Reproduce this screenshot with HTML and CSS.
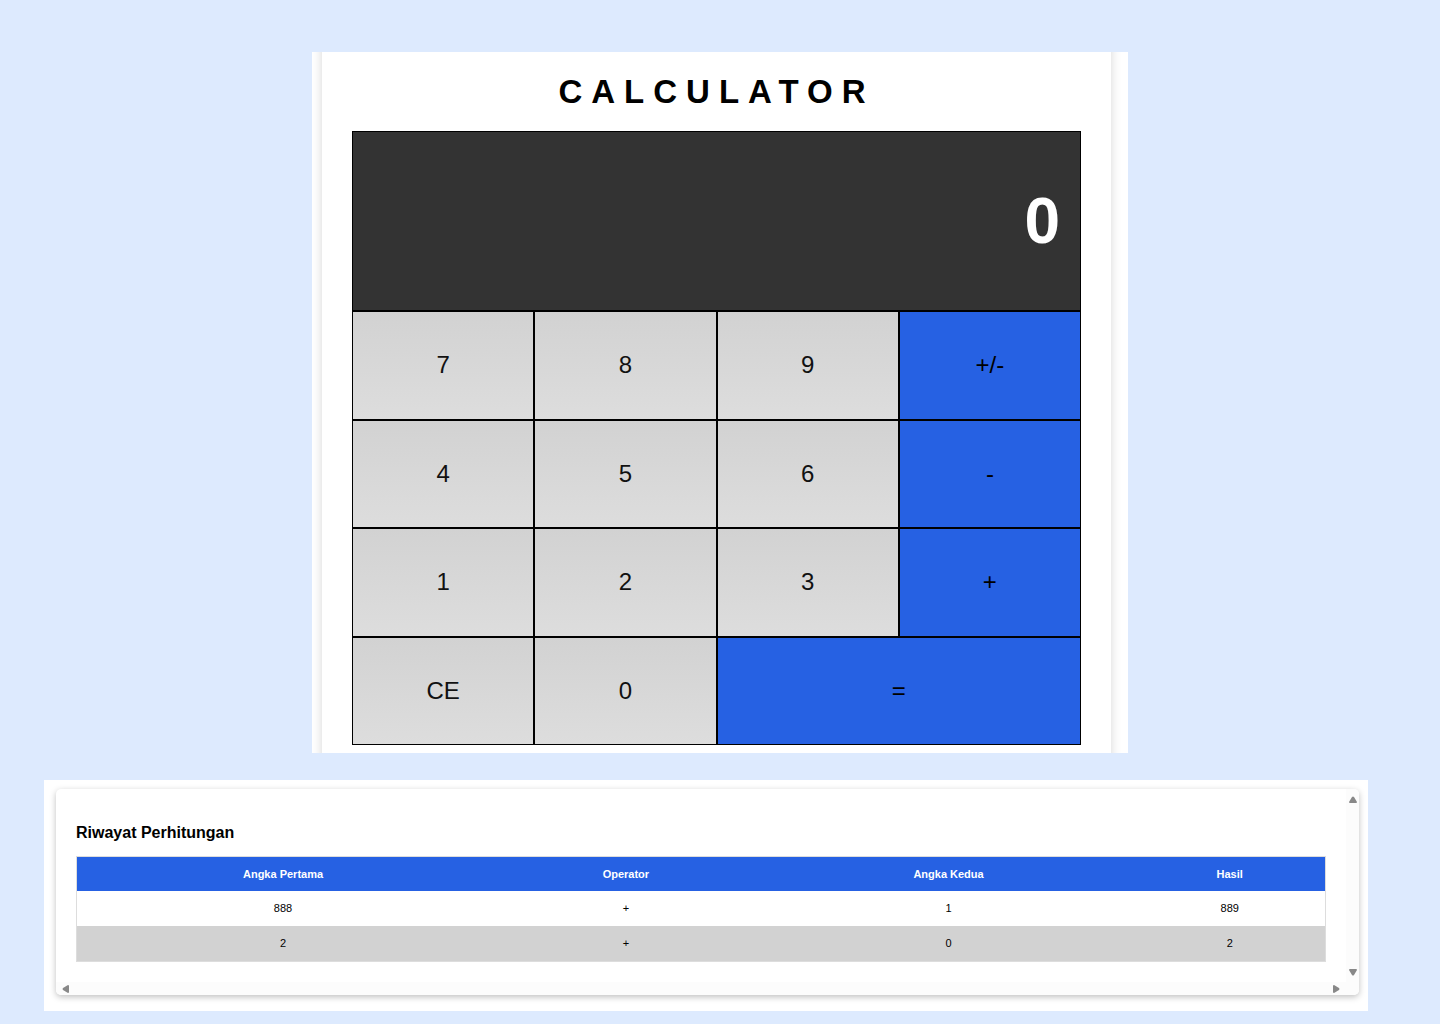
FILE: index.html
```html
<!DOCTYPE html>
<html lang="id">
<head>
<meta charset="utf-8">
<meta name="viewport" content="width=device-width, initial-scale=1">
<title>Calculator</title>
<link rel="stylesheet" href="styles.css">
</head>
<body>
<main class="page">
  <section class="calculator-frame">
    <div class="calculator-card">
      <h1 class="calculator-title">CALCULATOR</h1>
      <div class="calculator">
        <output class="display">0</output>
        <button class="key" type="button">7</button>
        <button class="key" type="button">8</button>
        <button class="key" type="button">9</button>
        <button class="key key-operator" type="button">+/-</button>
        <button class="key" type="button">4</button>
        <button class="key" type="button">5</button>
        <button class="key" type="button">6</button>
        <button class="key key-operator" type="button">-</button>
        <button class="key" type="button">1</button>
        <button class="key" type="button">2</button>
        <button class="key" type="button">3</button>
        <button class="key key-operator" type="button">+</button>
        <button class="key" type="button">CE</button>
        <button class="key" type="button">0</button>
        <button class="key key-operator key-wide" type="button">=</button>
      </div>
    </div>
  </section>

  <section class="history-frame">
    <div class="history-card">
      <div class="history-content">
        <h2 class="history-title" id="history-title">Riwayat Perhitungan</h2>
        <table class="history-table" aria-labelledby="history-title">
          <thead>
            <tr><th>Angka Pertama</th><th>Operator</th><th>Angka Kedua</th><th>Hasil</th></tr>
          </thead>
          <tbody>
            <tr><td>888</td><td>+</td><td>1</td><td>889</td></tr>
            <tr><td>2</td><td>+</td><td>0</td><td>2</td></tr>
          </tbody>
        </table>
      </div>
      <div class="scroll-vertical" aria-hidden="true">
        <svg width="8" height="7" viewBox="0 0 8 7"><path d="M3 1 Q4 0 5 1 L8 6 Q8 7 7 7 H1 Q0 7 0 6 Z"/></svg>
        <svg width="8" height="7" viewBox="0 0 8 7"><path d="M3 6 Q4 7 5 6 L8 1 Q8 0 7 0 H1 Q0 0 0 1 Z"/></svg>
      </div>
      <div class="scroll-horizontal" aria-hidden="true">
        <svg width="7" height="8" viewBox="0 0 7 8"><path d="M1 3 Q0 4 1 5 L6 8 Q7 8 7 7 V1 Q7 0 6 0 Z"/></svg>
        <svg width="7" height="8" viewBox="0 0 7 8"><path d="M6 3 Q7 4 6 5 L1 8 Q0 8 0 7 V1 Q0 0 1 0 Z"/></svg>
      </div>
    </div>
  </section>
</main>
</body>
</html>
```
FILE: styles.css
```css
* {
  box-sizing: border-box;
}

body {
  margin: 0;
  background: #ddeafe;
  color: #000;
  font-family: "Liberation Sans", Arial, sans-serif;
}

.page {
  display: flex;
  flex-direction: column;
  gap: 27px;
  padding: 52px 0 13px;
}

.calculator-frame {
  width: 100%;
  max-width: 816px;
  margin: 0 auto;
  padding: 0 17px 0 10px;
  overflow: hidden;
  background: #fff;
}

/* The card runs past the frame so its shadow shows only at the sides. */
.calculator-card {
  margin: -20px 0;
  padding: 40px 30px 28px;
  background: #fff;
  box-shadow: 0 0 10px rgba(0, 0, 0, 0.16);
}

.calculator-title {
  margin: 0 0 19px;
  font-size: 33px;
  line-height: 40px;
  letter-spacing: 9px;
  text-align: center;
}

.calculator {
  display: grid;
  grid-template-columns: repeat(4, 1fr);
  grid-template-rows: 178px repeat(4, 1fr);
  gap: 2px;
  min-height: 614px;
  padding: 1px;
  background: #000;
}

.display {
  grid-column: 1 / -1;
  display: flex;
  align-items: center;
  justify-content: flex-end;
  padding: 0 20px;
  background: #333;
  color: #fff;
  font-size: 64px;
  font-weight: 700;
}

.key {
  border: 0;
  padding: 0;
  background: linear-gradient(#d2d2d2, #ddd);
  color: #111;
  font-family: inherit;
  font-size: 24px;
}

.key-operator {
  background: #2661e3;
  color: #000;
}

.key-wide {
  grid-column: span 2;
}

.history-frame {
  margin: 0 72px 0 44px;
  padding: 9px 9px 16px 12px;
  background: #fff;
}

.history-card {
  display: grid;
  grid-template-columns: 1fr 13px;
  grid-template-rows: auto 13px;
  border-radius: 5px;
  background: #fff;
  box-shadow: 0 2px 6px rgba(0, 0, 0, 0.25);
}

.history-content {
  padding: 34px 20px 20px;
}

.history-title {
  margin: 0 0 13px;
  font-size: 16px;
  line-height: 20px;
}

.history-table {
  width: 100%;
  border: 1px solid #ddd;
  border-spacing: 0;
  font-size: 11px;
  line-height: 15px;
  text-align: center;
}

.history-table th,
.history-table td {
  padding: 10px;
}

.history-table th {
  padding-bottom: 9px;
  background: #2661e3;
  color: #fff;
}

.history-table tbody tr:nth-child(even) {
  background: #d2d2d2;
}

.scroll-vertical,
.scroll-horizontal {
  display: flex;
  justify-content: space-between;
  align-items: center;
  background: #fcfcfc;
  fill: #888;
}

.scroll-vertical {
  flex-direction: column;
  padding: 7px 0 6px;
  border-radius: 0 5px 0 0;
}

.scroll-horizontal {
  grid-column: 1 / -1;
  padding: 0 19px 0 6px;
  border-radius: 0 0 5px 5px;
}
```
